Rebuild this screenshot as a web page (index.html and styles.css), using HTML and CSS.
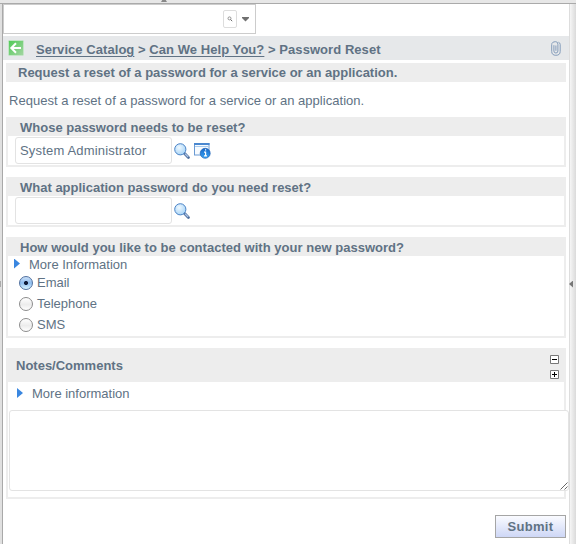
FILE: index.html
```html
<!DOCTYPE html>
<html lang="en">
<head>
<meta charset="utf-8">
<title>Password Reset</title>
<link rel="stylesheet" href="styles.css">
</head>
<body>
<svg class="sprites" aria-hidden="true">
  <defs>
    <radialGradient id="lens" cx=".4" cy=".35" r=".7">
      <stop offset="0" stop-color="#eef8ff"/><stop offset="1" stop-color="#a4d2f6"/>
    </radialGradient>
    <linearGradient id="green" x1="0" y1="0" x2="1" y2="1">
      <stop offset="0" stop-color="#4fcb55"/><stop offset="1" stop-color="#a4d5a3"/>
    </linearGradient>
    <linearGradient id="ball" x1="0" y1="0" x2="0" y2="1">
      <stop offset="0" stop-color="#1767c8"/><stop offset="1" stop-color="#3ba4f3"/>
    </linearGradient>
    <symbol id="magnifier" viewBox="0 0 16 16">
      <path d="M10.600 10.600 14.400 14.400" stroke="#4a6b9b" stroke-width="2.800" stroke-linecap="round"/>
      <path d="M11 10.800 14.200 14" stroke="#a9c3e6" stroke-width="1.300"/>
      <circle cx="6.300" cy="6.300" r="5.600" fill="url(#lens)" stroke="#4a83c6" stroke-width="1"/>
    </symbol>
  </defs>
</svg>
<div class="frame">
  <div class="splitter-top"><span class="grip-up"></span></div>
  <div class="splitter-left"><span class="grip-left"></span></div>
  <main class="content">
    <div class="toolbar">
      <span class="search-toggle"><svg width="6" height="6" viewBox="0 0 6 6"><circle cx="2.5" cy="2.4" r="1.5" fill="none" stroke="#888" stroke-width=".9"/><path d="M3.6 3.6 5.2 5.1" stroke="#666"/></svg></span>
      <svg class="caret" width="7" height="5" viewBox="0 0 7 5"><path d="M0 0h7v1L3.5 4.5 0 1z" fill="#707070"/></svg>
    </div>
    <nav class="breadcrumb">
      <svg class="back" width="16" height="16" viewBox="0 0 16 16"><rect x=".5" y=".5" width="15" height="15" rx="1" fill="url(#green)" stroke="#c3e5c6"/><path d="M13 8H4M8 3.300 3.300 8 8 12.700" fill="none" stroke="#fff" stroke-width="2"/></svg>
      <span class="trail"><a>Service Catalog</a> &gt; <a>Can We Help You?</a> &gt; Password Reset</span>
      <svg class="clip" width="10" height="15" viewBox="0 0 10 15"><path d="M2.9 4.2V10q0 2 2 2t2-2V3.3Q6.900 .7 4.800 .7 .7 .7 .7 3.600V10.400Q.7 14.300 4.900 14.300 9.200 14.300 9.200 10.400V3.600Q9.200 1.700 7.400 1.200M4.900 4.500V9.800" fill="none" stroke="#859dbb" stroke-width="1"/></svg>
    </nav>
    <h1 class="summary">Request a reset of a password for a service or an application.</h1>
    <p class="description">Request a reset of a password for a service or an application.</p>

    <section class="group">
      <h2 class="group-title">Whose password needs to be reset?</h2>
      <div class="lookup">
        <input class="field" type="text" value="System Administrator">
        <svg class="icon" width="16" height="16"><use href="#magnifier"/></svg>
        <svg class="icon" width="17" height="16" viewBox="0 0 17 16"><rect x=".5" y=".5" width="14.500" height="11.500" fill="#f7fbff" stroke="#6a9ad3"/><path d="M0 0h15.500v2H0z" fill="#4a88d0"/><path d="M1 3.500h13.500" stroke="#a9cbed"/><circle cx="11.200" cy="10.300" r="5" fill="url(#ball)" stroke="#2162b3" stroke-width=".7"/><path d="M10 9.200h1.600v3.500M10 12.900h3M11 6.900h1.200" stroke="#fff" stroke-width="1.200" fill="none"/></svg>
      </div>
    </section>

    <section class="group">
      <h2 class="group-title">What application password do you need reset?</h2>
      <div class="lookup">
        <input class="field" type="text">
        <svg class="icon" width="16" height="16"><use href="#magnifier"/></svg>
      </div>
    </section>

    <section class="group contact">
      <h2 class="group-title contact-title">How would you like to be contacted with your new password?</h2>
      <div class="more"><i class="arrow"></i><span>More Information</span></div>
      <label class="choice"><i class="radio checked"></i><span>Email</span></label>
      <label class="choice"><i class="radio"></i><span>Telephone</span></label>
      <label class="choice"><i class="radio"></i><span>SMS</span></label>
    </section>

    <section class="group notes">
      <header class="notes-head">
        <h2>Notes/Comments</h2>
        <div class="sizers">
          <svg width="9" height="9" viewBox="0 0 9 9"><path d="M.5.5h8v8h-8z" fill="#fff" stroke="#777"/><path d="M2 4.500h5" stroke="#000"/></svg>
          <svg width="9" height="9" viewBox="0 0 9 9"><path d="M.5.5h8v8h-8z" fill="#fff" stroke="#777"/><path d="M2 4.500h5M4.500 2v5" stroke="#000"/></svg>
        </div>
      </header>
      <div class="more"><i class="arrow"></i><span>More information</span></div>
      <div class="notes-box">
        <textarea class="comments"></textarea>
        <svg class="resize" width="8" height="8" viewBox="0 0 8 8"><path d="M.5 7.500 7.500.5M4.500 7.500 7.500 4.500" stroke="#555" stroke-width=".9"/></svg>
      </div>
    </section>
    <button class="submit">Submit</button>
  </main>
  <div class="splitter-right"><span class="grip-right"></span></div>
</div>
</body>
</html>
```
FILE: styles.css
```css
* { box-sizing: border-box; }
body {
  margin: 0;
  overflow: hidden;
  background: #fff;
  color: #607284;
  font: 13px/19px "Liberation Sans", Arial, sans-serif;
}
h1, h2, p { margin: 0; font-size: 13px; }
.sprites { position: absolute; width: 0; height: 0; }
.frame {
  display: grid;
  grid-template: 4px 540px / 3px 566px 7px;
}
.splitter-top {
  grid-column: 1 / 4;
  background: #e7e7e7;
  border-bottom: 1px solid #aaa;
}
.grip-up {
  display: block;
  width: 6px;
  height: 2px;
  margin-left: 161px;
  background: #888;
  clip-path: polygon(20% 0, 80% 0, 100% 100%, 0 100%);
}
.splitter-left {
  display: flex;
  align-items: center;
  background: #e0e0e0;
  border-right: 1px solid #a9a9a9;
}
.grip-left { width: 1px; height: 6px; margin-top: 20px; background: #aaa; }
.splitter-right {
  display: flex;
  align-items: center;
  border-left: 1px solid #ddd;
  background: linear-gradient(90deg, #f6f6f6, #dadada);
}
.grip-right {
  width: 4px;
  height: 7px;
  margin-top: 20px;
  margin-left: -1px;
  background: #777;
  clip-path: polygon(100% 0, 100% 100%, 0 50%);
}
.content { display: flex; flex-direction: column; min-width: 0; }
.toolbar {
  display: flex;
  align-items: center;
  justify-content: flex-end;
  gap: 5px;
  width: 253px;
  height: 30px;
  padding-right: 6px;
  border: 1px solid #ccc;
}
.search-toggle {
  display: flex;
  align-items: center;
  justify-content: center;
  width: 14px;
  height: 18px;
  border: 1px solid #ddd;
  border-radius: 2px;
}
.caret { margin-top: 1px; }
.breadcrumb {
  display: flex;
  align-items: center;
  height: 24px;
  margin-top: 2px;
  padding: 0 8px 0 5px;
  background: #e6e8ea;
  font-weight: bold;
}
.back { margin-top: -1px; }
.trail { margin: 3px auto 0 12px; white-space: nowrap; letter-spacing: .055px; }
.trail a { text-decoration: underline; text-underline-offset: 2px; }
.summary {
  height: 19px;
  margin: 3px 3px 0;
  padding-left: 12px;
  background: #ededed;
}
.description { margin: 9px 0 7px 6px; letter-spacing: .03px; }
.group {
  height: 50px;
  margin: 0 3px 10px;
  border: 2px solid #ededed;
  border-top: 0;
}
.group-title { height: 19px; padding: 1px 0 0 12px; background: #ededed; }
.contact-title { letter-spacing: .02px; }
.lookup { display: flex; align-items: center; height: 29px; padding-left: 7px; }
.field {
  width: 157px;
  height: 27px;
  margin-right: 2px;
  padding: 0 4px;
  border: 1px solid #e3e3e3;
  border-radius: 3px;
  color: inherit;
  font: inherit;
  letter-spacing: .18px;
}
.icon { margin-right: 4px; }
.contact { height: 101px; }
.more { display: flex; align-items: center; height: 16px; }
.more .arrow { margin: -1px 9px 0 6px; }
.arrow {
  width: 6px;
  height: 10px;
  background: #3a87e0;
  clip-path: polygon(0 0, 100% 50%, 0 100%);
}
.choice { display: flex; align-items: center; gap: 4px; height: 21px; padding-left: 11px; }
.radio {
  width: 14px;
  height: 14px;
  border: 1px solid #8c8c8c;
  border-radius: 50%;
  background: linear-gradient(#fff, #ececec 55%, #fff);
}
.radio.checked {
  border-color: #50709f;
  background: radial-gradient(circle, #101c38 0 1.6px, transparent 2.4px), linear-gradient(#cbe0f8, #8dbcee 50%, #d9f5ff);
}
.notes { height: 151px; }
.notes-head {
  display: flex;
  justify-content: space-between;
  align-items: center;
  height: 34px;
  padding: 0 5px 0 8px;
  background: #ededed;
}
.sizers { display: flex; flex-direction: column; gap: 6px; margin-top: 4px; }
.notes .more { height: 28px; padding: 0 0 6px 3px; }
.notes .arrow { margin-top: 0; }
.notes-box { position: relative; width: 560px; height: 81px; margin-left: 1px; }
.comments {
  display: block;
  width: 560px;
  height: 81px;
  border: 1px solid #e3e3e3;
  border-radius: 3px;
  resize: none;
}
.resize { position: absolute; right: 1px; bottom: 1px; }
.submit {
  align-self: flex-end;
  width: 71px;
  height: 23px;
  margin: 6px 3px 0 0;
  padding: 0;
  border: 1px solid #a5a5a5;
  background: linear-gradient(#fafbff, #ced7f6);
  color: inherit;
  font: bold 13px/20px "Liberation Sans", Arial, sans-serif;
  letter-spacing: .3px;
}
```
